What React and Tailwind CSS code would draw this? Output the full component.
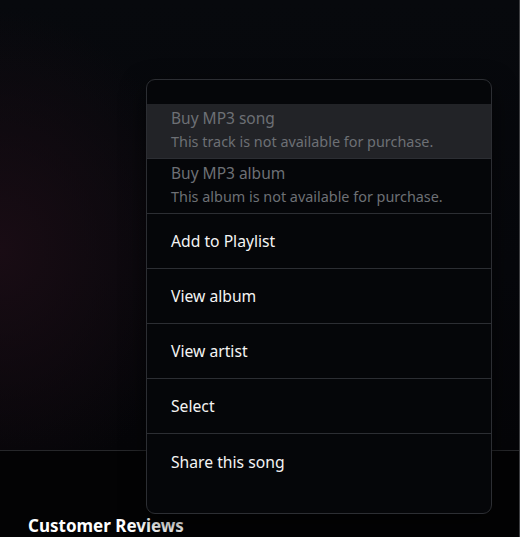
import { useState } from "react";

const buyOptions = [
  { title: "Buy MP3 song", note: "This track is not available for purchase." },
  { title: "Buy MP3 album", note: "This album is not available for purchase." },
];

const actions = ["Add to Playlist", "View album", "View artist", "Select", "Share this song"];

function ContextMenu() {
  const [hovered, setHovered] = useState(0);

  return (
    <div className="absolute left-[146px] top-[79px] w-[346px] rounded-[9px] border border-[#2c2e33] bg-[#050609] py-6 shadow-[0_8px_24px_rgba(0,0,0,0.6)]">
      {buyOptions.map((opt, i) => (
        <div
          key={opt.title}
          onMouseEnter={() => setHovered(i)}
          className={`h-[55px] border-b border-[#2c2e33] px-6 pt-[3px] ${
            hovered === i ? "bg-[#222327]" : ""
          }`}
        >
          <div className="text-[15.5px] leading-[22px] text-[#6d7075]">{opt.title}</div>
          <div className="text-[14.4px] leading-[26px] text-[#6d7075]">{opt.note}</div>
        </div>
      ))}
      {actions.map((label, i) => (
        <div
          key={label}
          className={`flex h-[55px] items-center px-6 pt-[2px] text-[15.7px] text-[#f4f4f4] ${
            i < actions.length - 1 ? "border-b border-[#2c2e33]" : ""
          }`}
        >
          {label}
        </div>
      ))}
    </div>
  );
}

export default function App() {
  return (
    <div
      className="relative h-[537px] w-[520px] overflow-hidden bg-[#030304]"
      style={{ fontFamily: '"Noto Sans", Arial, sans-serif' }}
    >
      {/* hero backdrop */}
      <div className="h-[451px] border-b border-[#26272a] bg-[radial-gradient(ellipse_200px_240px_at_0px_250px,#190c14_0%,transparent_100%),linear-gradient(180deg,#07090d_0%,#06070b_60%,#050508_100%)]" />

      <h2 className="ml-7 mt-[66px] text-[17px] font-bold leading-none text-white">Customer Reviews</h2>

      {/* scrollbar edge */}
      <div className="absolute right-0 top-0 h-full w-px bg-[#3e3f42]" />

      <ContextMenu />
    </div>
  );
}
